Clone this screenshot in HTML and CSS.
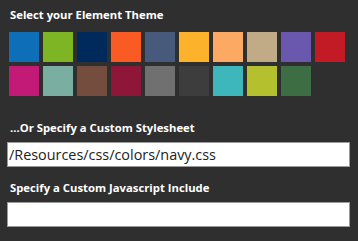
FILE: index.html
```html
<!DOCTYPE html>
<html>
<head>
<meta charset="utf-8">
<link rel="stylesheet" href="styles.css">
</head>
<body>
<div class="panel">
  <div class="label first">Select your Element Theme</div>
  <div class="swatches">
    <div class="sw c1"></div><div class="sw c2"></div><div class="sw c3"></div><div class="sw c4"></div><div class="sw c5"></div>
    <div class="sw c6"></div><div class="sw c7"></div><div class="sw c8"></div><div class="sw c9"></div><div class="sw c10"></div>
    <div class="sw c11"></div><div class="sw c12"></div><div class="sw c13"></div><div class="sw c14"></div><div class="sw c15"></div>
    <div class="sw c16"></div><div class="sw c17"></div><div class="sw c18"></div><div class="sw c19"></div>
  </div>
  <div class="label second">...Or Specify a Custom Stylesheet</div>
  <input class="field" type="text" value="/Resources/css/colors/navy.css">
  <div class="label third">Specify a Custom Javascript Include</div>
  <input class="field" type="text" value="">
</div>
</body>
</html>
```
FILE: styles.css
```css
html, body {
  margin: 0;
  padding: 0;
  background: #2f2f2f;
  width: 358px;
  height: 241px;
  overflow: hidden;
}
.panel {
  padding: 7px 9px 0 7px;
  font-family: "Open Sans", sans-serif;
}
.label {
  color: #ffffff;
  font-weight: 700;
  font-size: 11.3px;
  line-height: 16px;
  padding-left: 3px;
}
.first { margin-bottom: 9px; }
.swatches {
  display: grid;
  grid-template-columns: repeat(10, 30px);
  grid-auto-rows: 30px;
  gap: 4px;
  padding-left: 2px;
}
.sw { width: 30px; height: 30px; }
.c1 { background: #0e6eb8; }
.c2 { background: #7db525; }
.c3 { background: #002a5c; }
.c4 { background: #fa5a24; }
.c5 { background: #485a7c; }
.c6 { background: #fdb22b; }
.c7 { background: #fcaa63; }
.c8 { background: #c1ab87; }
.c9 { background: #6958ae; }
.c10 { background: #c31b26; }
.c11 { background: #c31a77; }
.c12 { background: #7aaea1; }
.c13 { background: #754d3e; }
.c14 { background: #8e1639; }
.c15 { background: #707070; }
.c16 { background: #3d3d3d; }
.c17 { background: #3db6bc; }
.c18 { background: #b4c02e; }
.c19 { background: #3d6d42; }
.second { margin-top: 24px; margin-bottom: 6px; }
.third { margin-top: 13px; margin-bottom: 6px; }
.field {
  display: block;
  box-sizing: border-box;
  width: 343px;
  height: 25px;
  margin: 0;
  border: 1px solid #9a9a9a;
  background: #fff;
  padding: 0 0 0 1px;
  font-family: "Open Sans", sans-serif;
  font-size: 14.4px;
  color: #222;
  outline: none;
}
```
